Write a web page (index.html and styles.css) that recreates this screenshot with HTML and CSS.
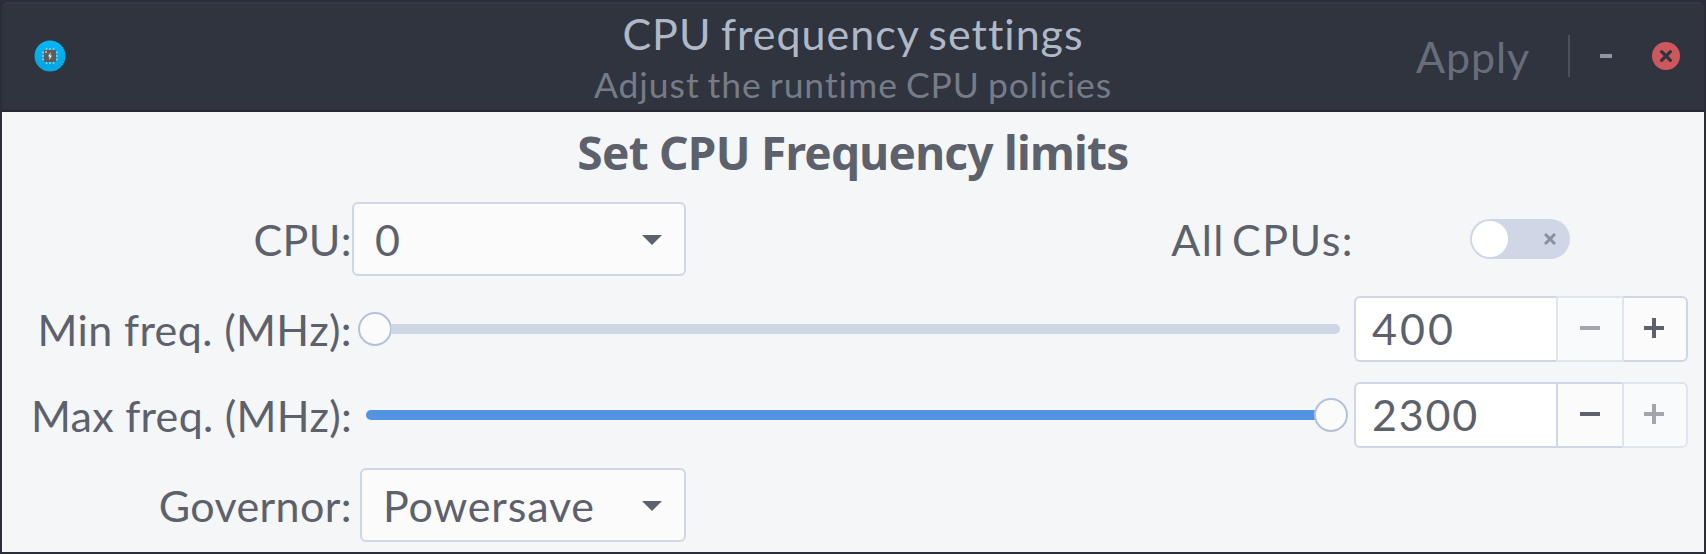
FILE: index.html
```html
<!DOCTYPE html>
<html lang="en">
<head>
<meta charset="utf-8">
<title>CPU frequency settings</title>
<link rel="stylesheet" href="styles.css">
</head>
<body>
<div class="window">
  <header class="headerbar">
    <svg class="app-icon" viewBox="0 0 32 32" width="32" height="32">
      <defs><linearGradient id="disc" x1="0" y1="0" x2="0" y2="1"><stop offset="0" stop-color="#06b6f5"/><stop offset="1" stop-color="#01a5dd"/></linearGradient></defs>
      <circle cx="16" cy="16" r="15.5" fill="url(#disc)"/>
      <path d="M12.5 8v16M16 8v16M19.5 8v16M8 12.5h16M8 16h16M8 19.5h16" stroke="#8fcbe0" stroke-width="1.5"/>
      <rect x="10" y="10" width="12" height="12" rx="1" fill="#5c5c5c"/>
      <circle cx="12" cy="12" r="0.9" fill="#d5d5d5"/>
      <path d="M16.8 12l-2.8 4.6h1.7l-.6 3.6 2.9-4.8h-1.8z" fill="#f0f0f0"/>
    </svg>
    <div class="titles">
      <div class="title">CPU frequency settings</div>
      <div class="subtitle">Adjust the runtime CPU policies</div>
    </div>
    <div class="controls">
      <span class="apply">Apply</span>
      <span class="separator"></span>
      <svg class="minimize" viewBox="0 0 12 4" width="12" height="4"><path d="M0 0h12v4H0z" fill="#9095a2"/></svg>
      <svg class="close" viewBox="0 0 28 28" width="28" height="28"><circle cx="14" cy="14" r="14" fill="#cc575d"/><path d="M9.6 9.6l8.8 8.8M18.4 9.6l-8.8 8.8" stroke="#2f343f" stroke-width="3.2" stroke-linecap="round"/></svg>
    </div>
  </header>
  <main class="content">
    <h1 class="heading">Set CPU Frequency limits</h1>
    <div class="row tall">
      <label class="name">CPU:</label>
      <div class="combo combo-cpu"><span>0</span><svg viewBox="0 0 20 10" width="20" height="10"><path d="M0 0h20L10 10z" fill="#5c616c"/></svg></div>
      <label class="all-cpus">All CPUs:</label>
      <div class="switch"><span class="knob"></span><svg viewBox="0 0 12 12" width="12" height="12"><path d="M1 1l10 10M11 1L1 11" stroke="#8b909e" stroke-width="3"/></svg></div>
    </div>
    <div class="row">
      <label class="name freq-min">Min freq. (MHz):</label>
      <div class="slider at-min"><span class="thumb"></span><span class="trough"></span></div>
      <div class="spin">
        <span class="entry digits-3">400</span>
        <span class="step disabled"><svg viewBox="0 0 20 20" width="20" height="20"><path d="M0 8h20v4H0z" fill="#a4a5ac"/></svg></span>
        <span class="step last"><svg viewBox="0 0 20 20" width="20" height="20"><path d="M0 8h8V0h4v8h8v4h-8v8H8v-8H0z" fill="#5c616c"/></svg></span>
      </div>
    </div>
    <div class="row">
      <label class="name freq-max">Max freq. (MHz):</label>
      <div class="slider at-max"><span class="trough filled"></span><span class="thumb"></span></div>
      <div class="spin">
        <span class="entry">2300</span>
        <span class="step"><svg viewBox="0 0 20 20" width="20" height="20"><path d="M0 8h20v4H0z" fill="#5c616c"/></svg></span>
        <span class="step last disabled"><svg viewBox="0 0 20 20" width="20" height="20"><path d="M0 8h8V0h4v8h8v4h-8v8H8v-8H0z" fill="#a4a5ac"/></svg></span>
      </div>
    </div>
    <div class="row tall">
      <label class="name">Governor:</label>
      <div class="combo combo-governor"><span>Powersave</span><svg viewBox="0 0 20 10" width="20" height="10"><path d="M0 0h20L10 10z" fill="#5c616c"/></svg></div>
    </div>
  </main>
</div>
</body>
</html>
```
FILE: styles.css
```css
* { box-sizing: border-box; }
body {
  margin: 0;
  background: #2b2e39;
  color: #5c616c;
  font-family: Lato, "Noto Sans", sans-serif;
  font-size: 43px;
  font-variant-ligatures: none;
}
svg { display: block; flex: none; }
.window { height: 554px; padding: 2px; }

.headerbar {
  height: 110px;
  display: grid;
  grid-template-columns: 1fr auto 1fr;
  background: #2f343f;
  border-top: 2px solid #353a48;
  border-bottom: 2px solid #262932;
  border-radius: 6px 6px 0 0;
}
.app-icon { margin: 36px 0 0 32px; }
.titles { padding-top: 5px; text-align: center; white-space: nowrap; }
.title { color: #afb8c6; line-height: 50px; letter-spacing: 1px; word-spacing: -2.6px; }
.subtitle { color: #767b87; font-size: 35.5px; line-height: 51px; letter-spacing: 0.95px; word-spacing: -2px; }
.controls {
  display: flex;
  align-items: center;
  justify-content: flex-end;
  height: 104px;
  padding-right: 24px;
}
.apply { color: #676e7b; letter-spacing: 0.9px; margin-right: 38px; }
.separator { width: 2px; height: 42px; background: #4a4f5b; margin-right: 30px; }
.minimize { margin-right: 40px; }

.content { background: #f5f6f8; height: 440px; }
.heading {
  margin: 0 0 10px;
  height: 80px;
  line-height: 81px;
  font-family: "Noto Sans", sans-serif;
  font-size: 46px;
  letter-spacing: -0.75px;
  text-align: center;
}
.row { display: flex; align-items: center; height: 66px; margin-bottom: 20px; white-space: nowrap; }
.row.tall { height: 74px; }
.name { width: 350px; text-align: right; letter-spacing: 0.4px; }
.freq-max { letter-spacing: 0.3px; }

.combo {
  height: 74px;
  display: flex;
  align-items: center;
  justify-content: space-between;
  padding: 0 22px 0 21px;
  background: #fbfbfc;
  border: 2px solid #cfd6e6;
  border-radius: 6px;
  letter-spacing: 0.85px;
}
.combo svg { margin-top: 2px; }
.combo-cpu { width: 334px; }
.combo-governor { width: 326px; margin-left: 8px; }
.all-cpus { width: 668px; text-align: right; letter-spacing: 1.5px; word-spacing: -5.5px; }

.switch {
  width: 100px;
  height: 40px;
  margin-left: 116px;
  padding: 0 14px 0 2px;
  display: flex;
  align-items: center;
  justify-content: space-between;
  background: #cfd6e6;
  border-radius: 20px;
}
.knob { width: 36px; height: 36px; border-radius: 50%; background: #fff; }

.slider { display: flex; align-items: center; }
.slider.at-min { width: 982px; margin-left: 6px; }
.slider.at-max { width: 982px; margin-left: 14px; }
.thumb { width: 34px; height: 34px; border: 2px solid #b7c0db; border-radius: 50%; background: #fbfbfc; flex: none; }
.trough { flex: 1; height: 10px; background: #cfd6e6; }
.at-min .trough { border-radius: 0 5px 5px 0; margin-left: -1px; }
.at-max .trough { border-radius: 5px 0 0 5px; background: #5294e2; margin-right: -1px; }

.spin { display: flex; width: 334px; height: 66px; margin-left: auto; margin-right: 16px; }
.entry {
  width: 202px;
  padding-left: 16px;
  line-height: 62px;
  background: #fff;
  border: 2px solid #cfd6e6;
  border-right: 0;
  border-radius: 6px 0 0 6px;
  letter-spacing: 1.8px;
}
.digits-3 { letter-spacing: 3px; }
.step {
  width: 66px;
  padding-bottom: 2px;
  display: flex;
  align-items: center;
  justify-content: center;
  background: #fbfbfc;
  border: 2px solid #cfd6e6;
  border-right: 0;
}
.step.last { padding-right: 2px; border-right: 2px solid #cfd6e6; border-left-color: #dfe5ee; border-radius: 0 6px 6px 0; }
.step.disabled { background: #f8fafc; border-color: #dfe5ee; }
```
